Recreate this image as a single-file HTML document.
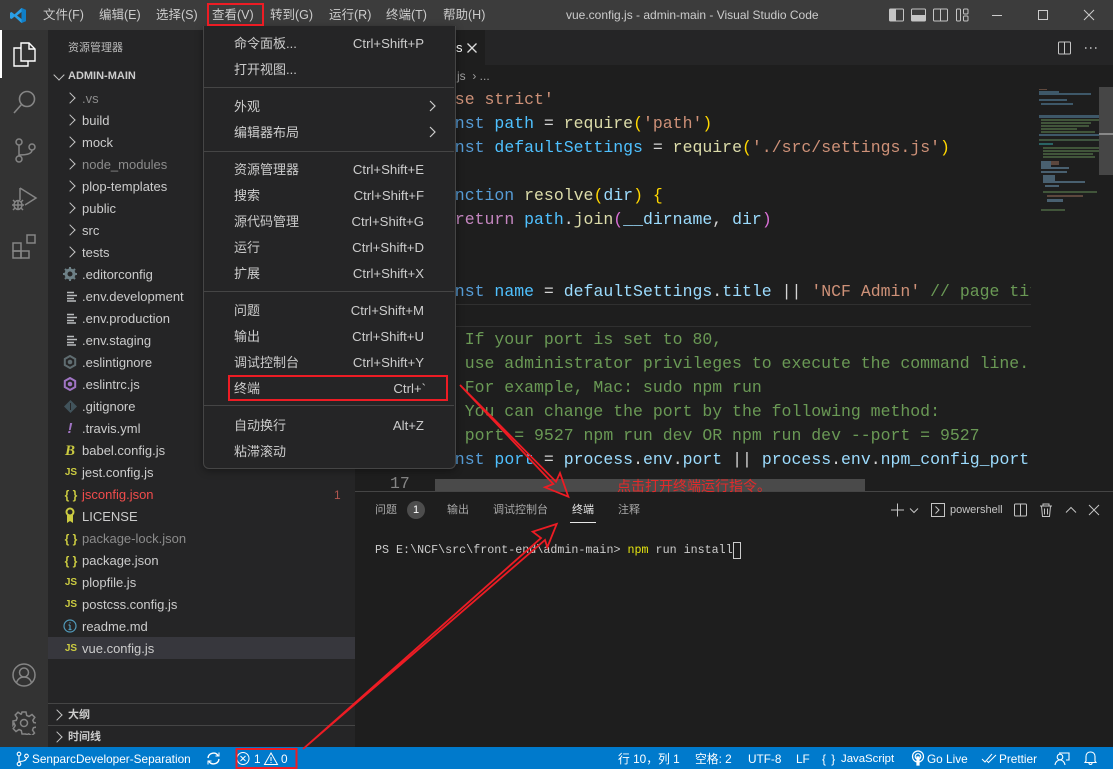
<!DOCTYPE html>
<html lang="zh"><head><meta charset="utf-8"><title>vue.config.js - admin-main - Visual Studio Code</title>
<style>
html,body{margin:0;padding:0;background:#1e1e1e}
#a{position:relative;width:1113px;height:769px;overflow:hidden;background:#1e1e1e;font:13px "Liberation Sans","Noto Sans CJK SC",sans-serif;color:#ccc}
#a div,#a span.t,#a svg{position:absolute}
.t{white-space:nowrap;line-height:18px}
.m{position:absolute;top:6px;color:#ccc;font-size:12.5px;line-height:18px;white-space:nowrap}
.r{position:absolute;left:82px;font-size:13px;line-height:22px;white-space:nowrap;color:#ccc;margin-top:1px}
.g{color:#8c8c8c}
.c{position:absolute;left:66px;width:7px;height:7px;border-top:1.2px solid #c5c5c5;border-right:1.2px solid #c5c5c5;transform:rotate(45deg)}
.i{position:absolute;left:63px;width:16px;text-align:center;line-height:22px;white-space:nowrap;margin-top:1px}
.js{color:#cbcb41;font-weight:bold;font-size:10px;font-family:"Liberation Sans",sans-serif}
.br{color:#cbcb41;font-weight:bold;font-size:12px}
.l{position:absolute;left:0;height:24px;line-height:24px;font:16.5px/24px "Liberation Mono",monospace;white-space:pre;color:#d4d4d4;margin-top:1px}
.k{color:#569cd6}.v{color:#4fc1ff}.f{color:#dcdcaa}.s{color:#ce9178}.o{color:#6a9955}.p{color:#9cdcfe}.y{color:#ffd700}.q{color:#da70d6}.e{color:#c586c0}
.mi{position:absolute;left:234px;font-size:13px;line-height:18px;color:#ccc;white-space:nowrap}
.ms{position:absolute;right:689px;font-size:13.2px;line-height:18px;color:#ccc;white-space:nowrap}
.sep{position:absolute;left:204px;width:250px;height:1px;background:#454545}
.st{position:absolute;top:750px;color:#fff;font-size:11.8px;line-height:18px;white-space:nowrap}
.pt{position:absolute;top:501px;color:#a8a8a8;font-size:11px;line-height:18px;white-space:nowrap}
</style></head><body>
<div id="a">

<!-- title bar -->
<div style="left:0;top:0;width:1113px;height:30px;background:#3c3c3c"></div>
<svg style="left:10px;top:7px" width="16" height="17" viewBox="0 0 16 17"><path d="M11.5 1 16 3v11l-4.5 2L4.5 9.600 1.600 12 0 11.200V5.800L1.600 5l2.900 2.400z" fill="#2a9fe6"/><path d="M11.5 1 16 3v11l-4.500 2z" fill="#0f7fc9"/><path d="M11.5 5 7 8.500l4.500 3.500z" fill="#3c3c3c"/></svg>
<span class="m" style="left:43px">文件(F)</span>
<span class="m" style="left:99px">编辑(E)</span>
<span class="m" style="left:156px">选择(S)</span>
<span class="m" style="left:212px">查看(V)</span>
<span class="m" style="left:270px">转到(G)</span>
<span class="m" style="left:329px">运行(R)</span>
<span class="m" style="left:386px">终端(T)</span>
<span class="m" style="left:443px">帮助(H)</span>
<span class="m" style="left:566px;font-size:12px;color:#ccc">vue.config.js - admin-main - Visual Studio Code</span>
<svg style="left:885px;top:6px" width="100" height="18" viewBox="0 0 100 18" fill="none" stroke="#c5c5c5" stroke-width="1">
<rect x="4.5" y="3" width="14" height="12" rx="1"/><rect x="5" y="3.5" width="6" height="11" fill="#c5c5c5" stroke="none"/>
<rect x="26.5" y="3" width="14" height="12" rx="1"/><rect x="27" y="9" width="13" height="6" fill="#c5c5c5" stroke="none"/>
<rect x="48.5" y="3" width="14" height="12" rx="1"/><path d="M55.500 3v12"/>
<rect x="71.500" y="3" width="4" height="12" rx="1"/><rect x="78.500" y="3" width="4.500" height="5" rx="1"/><rect x="78.500" y="10" width="4.500" height="5" rx="1"/>
</svg>
<svg style="left:985px;top:5px" width="128" height="20" viewBox="0 0 128 20" fill="none" stroke="#ccc" stroke-width="1">
<path d="M7 10.500h10"/><rect x="53.500" y="5.500" width="9" height="9"/><path d="M99 5l10 10M109 5l-10 10"/>
</svg>

<!-- activity bar -->
<div style="left:0;top:30px;width:48px;height:717px;background:#333"></div>
<div style="left:0;top:30px;width:2px;height:48px;background:#fff"></div>
<svg style="left:12px;top:41px" width="24" height="26" viewBox="0 0 24 26" fill="none" stroke="#fff" stroke-width="1.400">
<path d="M9 2h8l6 6v12H9z"/><path d="M17 2v6h6"/><path d="M9 7H2v18h14v-5"/></svg>
<svg style="left:12px;top:89px" width="24" height="26" viewBox="0 0 24 26" fill="none" stroke="#858585" stroke-width="1.600">
<circle cx="15" cy="10" r="7.500"/><path d="M9.500 15.500 2 24"/></svg>
<svg style="left:12px;top:137px" width="24" height="26" viewBox="0 0 24 26" fill="none" stroke="#858585" stroke-width="1.500">
<circle cx="7" cy="5" r="3"/><circle cx="7" cy="22" r="3"/><circle cx="20" cy="10" r="3"/><path d="M7 8v11M7 18c7 0 13-1 13-5"/></svg>
<svg style="left:10px;top:185px" width="28" height="28" viewBox="0 0 28 28" fill="none" stroke="#858585" stroke-width="1.500">
<path d="M10 3v12M10 3l16 10-11 7"/><ellipse cx="8" cy="20" rx="4" ry="4.500"/><path d="M2 20h12M3 15l2 2M13 15l-2 2M3 25l2-2M13 25l-2-2M8 16v9"/></svg>
<svg style="left:12px;top:233px" width="25" height="26" viewBox="0 0 25 26" fill="none" stroke="#858585" stroke-width="1.500">
<rect x="1" y="10" width="8" height="8"/><rect x="1" y="18" width="8" height="7"/><rect x="9" y="18" width="8" height="7"/><rect x="15" y="2" width="8" height="8"/></svg>
<svg style="left:12px;top:663px" width="24" height="24" viewBox="0 0 24 24" fill="none" stroke="#858585" stroke-width="1.500">
<circle cx="12" cy="12" r="11"/><circle cx="12" cy="9.500" r="4.500"/><path d="M4.500 20c1-4 4-6 7.500-6s6.500 2 7.500 6"/></svg>
<svg style="left:12px;top:711px" width="24" height="24" viewBox="0 0 24 24" fill="none" stroke="#858585" stroke-width="1.500">
<circle cx="12" cy="12" r="3.500"/><path d="M10 1h4l.7 3.500 2.300 1 3-2 2.800 2.800-2 3 1 2.300 3.200.4v4l-3.500.7-1 2.300 2 3-2.800 2.800-3-2-2.300 1L14 23h-4l-.7-3.500-2.300-1-3 2-2.800-2.800 2-3-1-2.300L1 14v-4l3.200-.7 1-2.300-2-3L6 1.200l3 2 .4-.2z"/></svg>

<!-- sidebar -->
<div style="left:48px;top:30px;width:307px;height:717px;background:#252526"></div>
<span class="t" style="left:68px;top:39px;font-size:11px;color:#bbb">资源管理器</span>
<div class="c" style="left:55px;top:71px;transform:rotate(135deg)"></div>
<span class="t" style="left:68px;top:67px;font-size:11px;font-weight:bold;color:#ccc">ADMIN-MAIN</span>
<div style="left:48px;top:637px;width:307px;height:22px;background:#37373d"></div>

<div class="c" style="top:94px"></div><span class="r g" style="top:87px">.vs</span>
<div class="c" style="top:116px"></div><span class="r" style="top:109px">build</span>
<div class="c" style="top:138px"></div><span class="r" style="top:131px">mock</span>
<div class="c" style="top:160px"></div><span class="r g" style="top:153px">node_modules</span>
<div class="c" style="top:182px"></div><span class="r" style="top:175px">plop-templates</span>
<div class="c" style="top:204px"></div><span class="r" style="top:197px">public</span>
<div class="c" style="top:226px"></div><span class="r" style="top:219px">src</span>
<div class="c" style="top:248px"></div><span class="r" style="top:241px">tests</span>

<svg style="left:63px;top:267px" width="14" height="14" viewBox="0 0 14 14"><circle cx="7" cy="7" r="4" fill="none" stroke="#6d8086" stroke-width="3"/><path d="M7 0v3M7 11v3M0 7h3M11 7h3M2 2l2 2M10 10l2 2M12 2l-2 2M2 12l2-2" stroke="#6d8086" stroke-width="2"/></svg>
<span class="r" style="top:263px">.editorconfig</span>
<svg style="left:66px;top:291px" width="12" height="11" viewBox="0 0 12 11" fill="none" stroke="#b9bcbd" stroke-width="1.500"><path d="M1 1.500h7M1 4.500h10M1 7.500h7M1 10h9"/></svg>
<span class="r" style="top:285px">.env.development</span>
<svg style="left:66px;top:313px" width="12" height="11" viewBox="0 0 12 11" fill="none" stroke="#b9bcbd" stroke-width="1.500"><path d="M1 1.500h7M1 4.500h10M1 7.500h7M1 10h9"/></svg>
<span class="r" style="top:307px">.env.production</span>
<svg style="left:66px;top:335px" width="12" height="11" viewBox="0 0 12 11" fill="none" stroke="#b9bcbd" stroke-width="1.500"><path d="M1 1.500h7M1 4.500h10M1 7.500h7M1 10h9"/></svg>
<span class="r" style="top:329px">.env.staging</span>
<svg style="left:63px;top:355px" width="14" height="14" viewBox="0 0 14 14" fill="none"><path d="M7 1l5.200 3v6L7 13l-5.200-3V4z" stroke="#5f6c70" stroke-width="2"/><circle cx="7" cy="7" r="2.300" fill="#5f6c70"/></svg>
<span class="r" style="top:351px">.eslintignore</span>
<svg style="left:63px;top:377px" width="14" height="14" viewBox="0 0 14 14" fill="none"><path d="M7 1l5.200 3v6L7 13l-5.200-3V4z" stroke="#a074c4" stroke-width="2"/><circle cx="7" cy="7" r="2.300" fill="#a074c4"/></svg>
<span class="r" style="top:373px">.eslintrc.js</span>
<svg style="left:64px;top:400px" width="13" height="13" viewBox="0 0 13 13"><path d="M6.500 0 13 6.500 6.500 13 0 6.500z" fill="#41535b"/><path d="M6.500 3v7" stroke="#252526"/></svg>
<span class="r" style="top:395px">.gitignore</span>
<span class="i" style="top:417px;left:62px;color:#a074c4;font-weight:bold;font-size:15px;font-style:italic">!</span>
<span class="r" style="top:417px">.travis.yml</span>
<span class="i" style="top:439px;left:62px;color:#cbcb41;font-size:15px;font-weight:bold;font-style:italic;font-family:'Liberation Serif',serif">B</span>
<span class="r" style="top:439px">babel.config.js</span>
<span class="i js" style="top:461px">JS</span><span class="r" style="top:461px">jest.config.js</span>
<span class="i br" style="top:483px">{ }</span><span class="r" style="top:483px;color:#f14c4c">jsconfig.json</span>
<span class="t" style="left:334px;top:486px;font-size:12px;color:#b0564f">1</span>
<svg style="left:64px;top:507px" width="12" height="17" viewBox="0 0 12 17"><circle cx="6" cy="5" r="3.500" fill="none" stroke="#cbcb41" stroke-width="2"/><path d="M3 8v8l3-2 3 2V8z" fill="#cbcb41"/></svg>
<span class="r" style="top:505px">LICENSE</span>
<span class="i br" style="top:527px">{ }</span><span class="r g" style="top:527px">package-lock.json</span>
<span class="i br" style="top:549px">{ }</span><span class="r" style="top:549px">package.json</span>
<span class="i js" style="top:571px">JS</span><span class="r" style="top:571px">plopfile.js</span>
<span class="i js" style="top:593px">JS</span><span class="r" style="top:593px">postcss.config.js</span>
<svg style="left:63px;top:619px" width="14" height="14" viewBox="0 0 14 14" fill="none" stroke="#519aba" stroke-width="1.200"><circle cx="7" cy="7" r="6"/><path d="M7 6v4.500M5.500 6H7M5.500 10.500h3M7 3.200v1.200"/></svg>
<span class="r" style="top:615px">readme.md</span>
<span class="i js" style="top:637px">JS</span><span class="r" style="top:637px">vue.config.js</span>

<div style="left:48px;top:703px;width:307px;height:1px;background:#454545"></div>
<div style="left:48px;top:725px;width:307px;height:1px;background:#454545"></div>
<div class="c" style="left:53px;top:711px"></div>
<span class="t" style="left:68px;top:706px;font-size:11px;font-weight:bold;color:#ccc">大纲</span>
<div class="c" style="left:53px;top:733px"></div>
<span class="t" style="left:68px;top:728px;font-size:11px;font-weight:bold;color:#ccc">时间线</span>

<!-- tabs -->
<div style="left:355px;top:30px;width:758px;height:35px;background:#252526"></div>
<div style="left:355px;top:30px;width:130px;height:35px;background:#1e1e1e"></div>
<span class="t" style="left:456px;top:39px;color:#fff;font-size:13px">s</span>
<svg style="left:465px;top:41px" width="14" height="14" viewBox="0 0 14 14" stroke="#ddd" stroke-width="1.300"><path d="M2.500 2.500l9 9M11.500 2.500l-9 9"/></svg>
<svg style="left:1057px;top:40px" width="44" height="16" viewBox="0 0 44 16" fill="none" stroke="#c5c5c5" stroke-width="1">
<rect x="1.500" y="2" width="12" height="12" rx="1"/><path d="M7.500 2v12"/>
<path d="M28 8h1.500M33 8h1.500M38 8h1.500" stroke-width="1.500"/></svg>
<span class="t" style="left:457px;top:67px;font-size:12px;color:#a0a0a0">js &nbsp;› ...</span>

<!-- code -->
<div style="left:355px;top:87px;width:676px;height:404px;overflow:hidden">
<div style="left:0;top:217px;width:676px;height:21px;border-top:1px solid #303030;border-bottom:1px solid #303030"></div>
<div class="l" style="top:0;left:80px"><span class="s">'use strict'</span></div>
<div class="l" style="top:24px;left:80px"><span class="k">const</span> <span class="v">path</span> = <span class="f">require</span><span class="y">(</span><span class="s">'path'</span><span class="y">)</span></div>
<div class="l" style="top:48px;left:80px"><span class="k">const</span> <span class="v">defaultSettings</span> = <span class="f">require</span><span class="y">(</span><span class="s">'./src/settings.js'</span><span class="y">)</span></div>
<div class="l" style="top:96px;left:80px"><span class="k">function</span> <span class="f">resolve</span><span class="y">(</span><span class="p">dir</span><span class="y">)</span> <span class="y">{</span></div>
<div class="l" style="top:120px;left:80px">  <span class="e">return</span> <span class="v">path</span>.<span class="f">join</span><span class="q">(</span><span class="p">__dirname</span>, <span class="p">dir</span><span class="q">)</span></div>
<div class="l" style="top:192px;left:80px"><span class="k">const</span> <span class="v">name</span> = <span class="p">defaultSettings</span>.<span class="p">title</span> || <span class="s">'NCF Admin'</span> <span class="o">// page title</span></div>
<div class="l o" style="top:240px;left:80px">// If your port is set to 80,</div>
<div class="l o" style="top:264px;left:80px">// use administrator privileges to execute the command line.</div>
<div class="l o" style="top:288px;left:80px">// For example, Mac: sudo npm run</div>
<div class="l o" style="top:312px;left:80px">// You can change the port by the following method:</div>
<div class="l o" style="top:336px;left:80px">// port = 9527 npm run dev OR npm run dev --port = 9527</div>
<div class="l" style="top:360px;left:80px"><span class="k">const</span> <span class="v">port</span> = <span class="p">process</span>.<span class="p">env</span>.<span class="p">port</span> || <span class="p">process</span>.<span class="p">env</span>.<span class="p">npm_config_port</span></div>
<div class="l" style="top:384px;left:35px;color:#858585">17</div>
<div style="left:80px;top:392px;width:430px;height:12px;background:#4a4a4a"></div>
</div>

<!-- minimap -->
<div style="left:1031px;top:87px;width:82px;height:404px;background:#1e1e1e"></div>
<div style="left:1099px;top:87px;width:14px;height:88px;background:#464646"></div>
<div style="left:1099px;top:133px;width:14px;height:2px;background:#888"></div>
<svg style="left:1039px;top:87px;opacity:.72" width="60" height="125" viewBox="0 0 60 125" shape-rendering="crispEdges">
<g fill="#4b6f86"><rect x="0" y="2" width="8" height="1" fill="#7a5a4a"/><rect x="0" y="4" width="20" height="2"/><rect x="0" y="6" width="52" height="2"/><rect x="0" y="12" width="28" height="2"/><rect x="2" y="16" width="32" height="2"/><rect x="0" y="28" width="60" height="3"/></g>
<g fill="#4f6b45"><rect x="2" y="32" width="58" height="2"/><rect x="2" y="35" width="50" height="2"/><rect x="2" y="38" width="48" height="2"/><rect x="2" y="41" width="36" height="2"/><rect x="2" y="44" width="54" height="2"/></g>
<rect x="0" y="47" width="60" height="2" fill="#4b6f86"/><rect x="0" y="52" width="60" height="2" fill="#4d6a4d"/><rect x="0" y="56" width="14" height="2" fill="#2f7f7f"/>
<g fill="#4f6b45"><rect x="4" y="60" width="56" height="2"/><rect x="4" y="63" width="56" height="2"/><rect x="4" y="66" width="50" height="2"/><rect x="4" y="69" width="52" height="2"/></g>
<g fill="#5a7a90"><rect x="2" y="74" width="10" height="6"/><rect x="12" y="74" width="8" height="4" fill="#74584a"/><rect x="2" y="80" width="28" height="2"/><rect x="2" y="84" width="26" height="2"/><rect x="4" y="88" width="12" height="6"/><rect x="4" y="94" width="42" height="2"/><rect x="6" y="98" width="14" height="2"/></g>
<rect x="4" y="104" width="54" height="2" fill="#4f6b45"/><rect x="8" y="108" width="36" height="2" fill="#74584a"/><rect x="8" y="112" width="16" height="3" fill="#5a7a90"/><rect x="2" y="122" width="24" height="2" fill="#4f6b45"/>
</svg>

<!-- panel -->
<div style="left:355px;top:491px;width:758px;height:256px;background:#1e1e1e;border-top:1px solid #454545;box-sizing:border-box"></div>
<span class="pt" style="left:375px">问题</span>
<div style="left:407px;top:501px;width:18px;height:18px;border-radius:9px;background:#4d4d4d;color:#fff;font-size:11px;line-height:18px;text-align:center">1</div>
<span class="pt" style="left:447px">输出</span>
<span class="pt" style="left:493px">调试控制台</span>
<span class="pt" style="left:572px;color:#e7e7e7">终端</span>
<div style="left:570px;top:522px;width:26px;height:1px;background:#e7e7e7"></div>
<span class="pt" style="left:618px">注释</span>
<svg style="left:888px;top:500px" width="225" height="20" viewBox="0 0 225 20" fill="none" stroke="#c5c5c5" stroke-width="1">
<path d="M3 10h13M9.500 3.500v13"/><path d="M22 8.500l4 4 4-4"/>
<rect x="43.500" y="3.500" width="13" height="13"/><path d="M47.500 6.500l3.500 3.500-3.500 3.500"/>
<rect x="126.500" y="4" width="12" height="12" rx="1"/><path d="M132.500 4v12"/>
<path d="M152 6h12M155 6V4h6v2M153.500 6l1 10.500h7l1-10.500M156.500 8.500v6M159.500 8.500v6"/>
<path d="M178 12.500l5-5 5 5"/><path d="M201 5l10 10M211 5l-10 10"/></svg>
<span class="t" style="left:950px;top:501px;font-size:11px;color:#c5c5c5">powershell</span>
<div class="l" style="left:375px;top:537px;font-size:11.7px;color:#ccc">PS E:\NCF\src\front-end\admin-main&gt; <span style="color:#e5e510">npm</span> run install</div>
<div style="left:733px;top:542px;width:6px;height:15px;border:1px solid #ccc"></div>

<!-- status bar -->
<div style="left:0;top:747px;width:1113px;height:22px;background:#007acc"></div>
<svg style="left:15px;top:751px" width="16" height="16" viewBox="0 0 16 16" fill="none" stroke="#fff" stroke-width="1.100"><circle cx="4" cy="3" r="1.800"/><circle cx="4" cy="13" r="1.800"/><circle cx="11.500" cy="5" r="1.800"/><path d="M4 5v6M4 10.500c5 0 7.500-1 7.500-3.700"/></svg>
<span class="st" style="left:32px">SenparcDeveloper-Separation</span>
<svg style="left:206px;top:751px" width="15" height="15" viewBox="0 0 15 15" fill="none" stroke="#fff" stroke-width="1.400"><path d="M2 7a5.500 5.500 0 0 1 10-2.500M13 8a5.500 5.500 0 0 1-10 2.500"/><path d="M9.500 5H13V1.500M5.500 10H2v3.500" stroke-width="1"/></svg>
<svg style="left:236px;top:751px" width="58" height="15" viewBox="0 0 58 15" fill="none" stroke="#fff" stroke-width="1"><circle cx="7" cy="7.500" r="6"/><path d="M4.500 5l5 5M9.500 5l-5 5"/><path d="M35 2l6.500 11.500h-13z"/><path d="M35 6v4M35 11v1"/></svg>
<span class="st" style="left:254px">1</span>
<span class="st" style="left:281px">0</span>
<span class="st" style="left:618px">行 10，列 1</span>
<span class="st" style="left:695px">空格: 2</span>
<span class="st" style="left:748px">UTF-8</span>
<span class="st" style="left:796px">LF</span>
<span class="st" style="left:822px;letter-spacing:1px">{ }</span>
<span class="st" style="left:841px;font-size:11.4px">JavaScript</span>
<svg style="left:911px;top:750px" width="14" height="16" viewBox="0 0 14 16" fill="none" stroke="#fff" stroke-width="1.200"><circle cx="7" cy="6.500" r="5.500"/><circle cx="7" cy="6.500" r="2.800"/><path d="M6 7v8h2V7z" fill="#fff"/></svg>
<span class="st" style="left:927px">Go Live</span>
<svg style="left:981px;top:752px" width="16" height="13" viewBox="0 0 16 13" fill="none" stroke="#fff" stroke-width="1"><path d="M1 7l3 3L11 2M6 9l1.500 1.500L15 3"/></svg>
<span class="st" style="left:999px">Prettier</span>
<svg style="left:1054px;top:751px" width="16" height="15" viewBox="0 0 16 15" fill="none" stroke="#fff" stroke-width="1.100"><circle cx="6" cy="6" r="2.800"/><path d="M1 14c.5-3 2.500-5 5-5s4.500 2 5 5M5 2h10v7h-3"/></svg>
<svg style="left:1083px;top:750px" width="15" height="16" viewBox="0 0 15 16" fill="none" stroke="#fff" stroke-width="1.100"><path d="M7.500 2c-3 0-4.500 2-4.500 4.500V11L2 12.500h11L12 11V6.500C12 4 10.500 2 7.500 2zM6 13a1.500 1.500 0 0 0 3 0"/></svg>

<!-- menu -->
<div style="left:203px;top:26px;width:251px;height:442px;background:#252526;border:1px solid #454545;border-top:none;border-radius:0 0 6px 6px;box-shadow:0 2px 8px rgba(0,0,0,.36)"></div>
<div class="sep" style="top:87px"></div><div class="sep" style="top:151px"></div><div class="sep" style="top:291px"></div><div class="sep" style="top:405px"></div>
<span class="mi" style="top:35px">命令面板...</span><span class="ms" style="top:35px">Ctrl+Shift+P</span>
<span class="mi" style="top:61px">打开视图...</span>
<span class="mi" style="top:98px">外观</span>
<span class="mi" style="top:124px">编辑器布局</span>
<svg style="left:428px;top:99px" width="10" height="42" viewBox="0 0 10 42" fill="none" stroke="#ccc" stroke-width="1.200"><path d="M2 2l5 5-5 5M2 28l5 5-5 5"/></svg>
<span class="mi" style="top:161px">资源管理器</span><span class="ms" style="top:161px">Ctrl+Shift+E</span>
<span class="mi" style="top:187px">搜索</span><span class="ms" style="top:187px">Ctrl+Shift+F</span>
<span class="mi" style="top:213px">源代码管理</span><span class="ms" style="top:213px">Ctrl+Shift+G</span>
<span class="mi" style="top:239px">运行</span><span class="ms" style="top:239px">Ctrl+Shift+D</span>
<span class="mi" style="top:265px">扩展</span><span class="ms" style="top:265px">Ctrl+Shift+X</span>
<span class="mi" style="top:302px">问题</span><span class="ms" style="top:302px">Ctrl+Shift+M</span>
<span class="mi" style="top:328px">输出</span><span class="ms" style="top:328px">Ctrl+Shift+U</span>
<span class="mi" style="top:354px">调试控制台</span><span class="ms" style="top:354px">Ctrl+Shift+Y</span>
<span class="mi" style="top:380px">终端</span><span class="ms" style="top:380px;right:687px">Ctrl+`</span>
<span class="mi" style="top:417px">自动换行</span><span class="ms" style="top:417px">Alt+Z</span>
<span class="mi" style="top:443px">粘滞滚动</span>

<!-- annotations -->
<span class="t" style="left:617px;top:477px;font-size:14px;color:#e32a2a">点击打开终端运行指令。</span>
<svg style="left:0;top:0" width="1113" height="769" viewBox="0 0 1113 769" fill="none" stroke="#ed1c24" stroke-width="2">
<rect x="208" y="4" width="55" height="21"/>
<rect x="229" y="376" width="218" height="24"/>
<rect x="236.500" y="749" width="60" height="19"/>
<path d="M460 385 556 481.700 560 473 568.300 496.700 545 487.300 553.300 484z" stroke-width="1.800"/>
<path d="M303 749 541 538 532.700 531.700 556.700 524 547.300 547.300 545 540z" stroke-width="1.800"/>
</svg>
</div>
</body></html>
